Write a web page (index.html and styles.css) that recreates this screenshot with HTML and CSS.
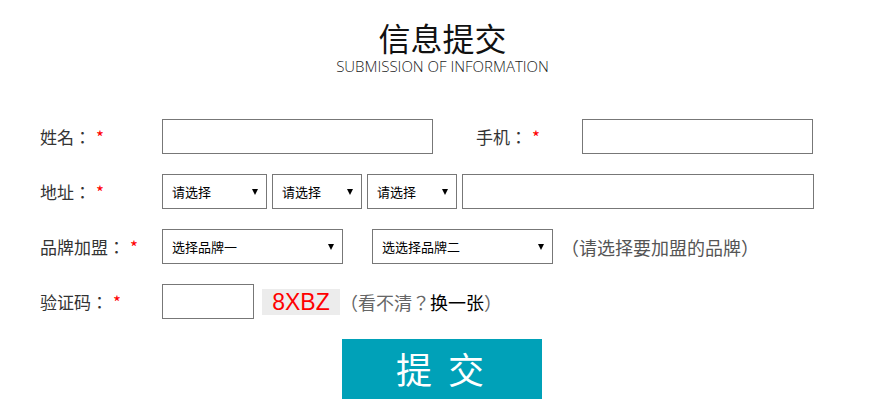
FILE: index.html
```html
<!DOCTYPE html>
<html>
<head lang="zh">
    <meta charset="UTF-8">
    <title>信息提交</title>
    <link rel="stylesheet" href="styles.css">
</head>
<body>
<div class="box">
    <div class="head">
        <h2 class="title">信息提交</h2>
        <div class="sub">SUBMISSION OF INFORMATION</div>
    </div>
    <div class="row">
        <label class="lab">姓名：<i>*</i></label>
        <input type="text" class="ipt w-name">
        <label class="lab lab-tel">手机：<i>*</i></label>
        <input type="text" class="ipt w-tel">
    </div>
    <div class="row">
        <label class="lab">地址：<i>*</i></label>
        <span class="sel w-prov"><select><option>请选择</option></select></span>
        <span class="sel w-city"><select><option>请选择</option></select></span>
        <span class="sel w-area"><select><option>请选择</option></select></span>
        <input type="text" class="ipt w-addr">
    </div>
    <div class="row">
        <label class="lab">品牌加盟：<i>*</i></label>
        <span class="sel w-brand"><select><option>选择品牌一</option></select></span>
        <span class="sel w-brand gap"><select><option>选选择品牌二</option></select></span>
        <span class="tip">（请选择要加盟的品牌）</span>
    </div>
    <div class="row">
        <label class="lab">验证码：<i>*</i></label>
        <input type="text" class="ipt w-code">
        <span class="code">8XBZ</span>
        <span class="tip2">（看不清？<a href="#">换一张</a>）</span>
    </div>
    <div class="func">
        <a class="btn">提 交</a>
    </div>
</div>
</body>
</html>
```

FILE: styles.css
```css
* {
    margin: 0;
    padding: 0;
    box-sizing: border-box;
}

body {
    font-family: "Noto Sans CJK TC", "Noto Sans CJK SC", "Liberation Sans", sans-serif;
    color: #333;
    background: #fff;
}

.box {
    width: 889px;
    padding: 18px 0 0 40px;
}

.head {
    text-align: center;
    width: 805px;
    margin-bottom: 44px;
}

.title {
    font-family: "Noto Sans CJK SC", sans-serif;
    font-size: 32px;
    font-weight: normal;
    color: #111;
    line-height: 38px;
}

.sub {
    font-family: "Open Sans", sans-serif;
    font-weight: 300;
    font-size: 15px;
    color: #222;
    line-height: 18px;
    margin-top: 1px;
}

.row {
    display: flex;
    align-items: center;
    height: 35px;
    margin-bottom: 20px;
    font-size: 17px;
}

.lab {
    width: 122px;
    color: #333;
}

.lab i {
    font-style: normal;
    color: #f00;
    margin-left: 5px;
}

.lab-tel {
    width: 106px;
    margin-left: 43px;
}

.ipt {
    height: 35px;
    border: 1px solid #777;
    outline: none;
}

.w-name { width: 271px; }
.w-tel { width: 231px; }
.w-addr { width: 352px; }
.w-code { width: 92px; }

.sel {
    position: relative;
    display: inline-block;
    height: 35px;
    margin-right: 5px;
}

.sel select {
    appearance: none;
    -webkit-appearance: none;
    width: 100%;
    height: 35px;
    border: 1px solid #777;
    border-radius: 0;
    background: #fff;
    font-family: "Noto Sans CJK SC", sans-serif;
    font-size: 13px;
    color: #000;
    padding-left: 9px;
    outline: none;
}

.sel::after {
    content: "";
    position: absolute;
    right: 9px;
    top: 15px;
    border-left: 3px solid transparent;
    border-right: 3px solid transparent;
    border-top: 6px solid #000;
}

.w-prov { width: 105px; }
.w-city { width: 90px; }
.w-area { width: 90px; }
.w-brand { width: 181px; margin-right: 0; }
.gap { margin-left: 29px; }

.tip {
    margin-left: 8px;
    font-size: 18px;
    color: #555;
}

.code {
    display: inline-block;
    width: 78px;
    height: 26px;
    line-height: 26px;
    margin-left: 8px;
    background: #ececec;
    color: #f00;
    font-family: "Liberation Sans", sans-serif;
    font-size: 23px;
    text-align: center;
}

.tip2 {
    font-size: 18px;
    color: #666;
}

.tip2 a {
    color: #000;
    text-decoration: none;
}

.func {
    padding-left: 302px;
    margin-top: 1px;
}

.btn {
    display: inline-block;
    width: 200px;
    height: 60px;
    line-height: 58px;
    background-color: #00a1b8;
    color: #fff;
    font-family: "Noto Sans CJK SC", sans-serif;
    font-size: 36px;
    text-align: center;
    letter-spacing: 4px;
}
```
